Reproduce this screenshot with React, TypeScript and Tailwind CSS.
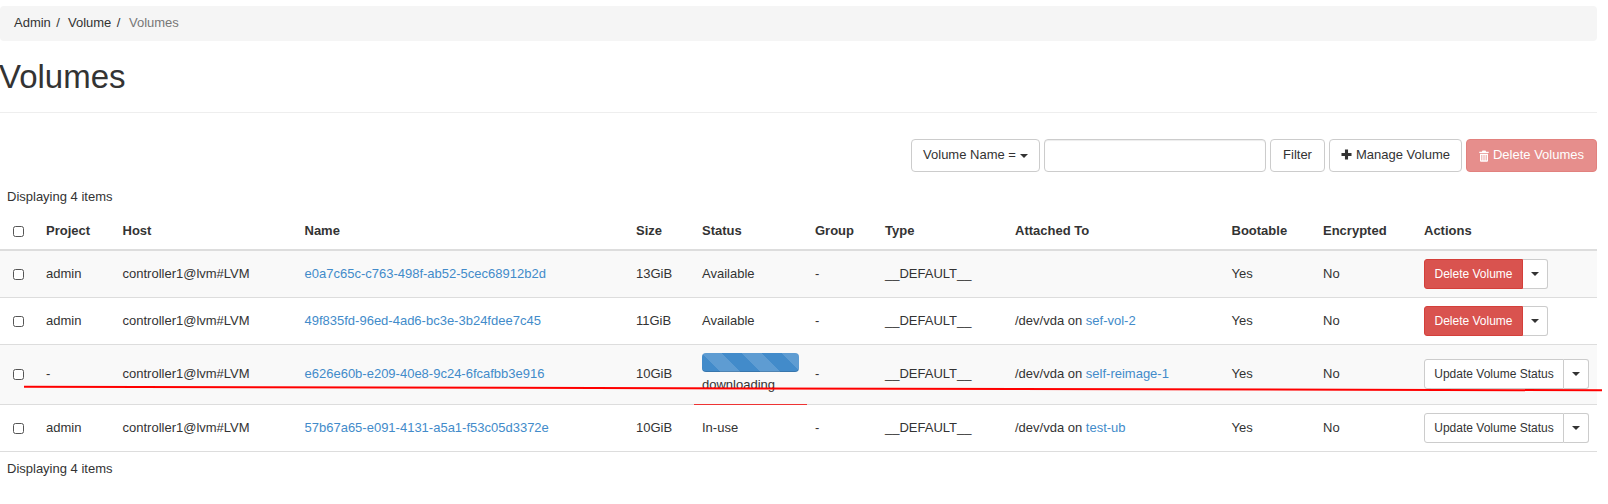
import React from "react";

const caret = "inline-block w-0 h-0 border-x-4 border-x-transparent border-t-4 border-t-[#333]";
const sans = "font-['Liberation_Sans',Arial,sans-serif]";

function Split({ kind, label }: { kind: "danger" | "default"; label: string }) {
  const main =
    kind === "danger"
      ? "bg-[#d9534f] border-[#d43f3a] text-white w-[99px]"
      : "bg-white border-[#ccc] text-[#333] w-[140px]";
  return (
    <div className="flex h-[30px] text-xs">
      <button className={`${main} border rounded-l-[3px] h-[30px] leading-[18px] text-center whitespace-nowrap`}>{label}</button>
      <button className="w-[25px] h-[30px] bg-white border border-[#ccc] border-l-0 rounded-r-[3px] flex items-center justify-center">
        <span className={caret} />
      </button>
    </div>
  );
}

const Link = ({ children }: { children: React.ReactNode }) => <a className="text-[#428bca]">{children}</a>;
const Check = () => <input type="checkbox" className="block ml-[5px] m-0 w-[11px] h-[11px] appearance-none rounded-[2.5px] border-[1.5px] border-[#555] bg-white" />;

const Attached = ({ name }: { name: string }) => (
  <>
    /dev/vda on <Link>{name}</Link>
  </>
);

const Progress = () => (
  <div>
    <div className="h-[19px] w-[97px] rounded bg-[#428bca] bg-[linear-gradient(45deg,rgba(255,255,255,0.15)_25%,transparent_25%,transparent_50%,rgba(255,255,255,0.15)_50%,rgba(255,255,255,0.15)_75%,transparent_75%,transparent)] bg-size-[40px_40px] shadow-[inset_0_-1px_0_rgba(0,0,0,0.15)]" />
    <div className="mt-[4px] leading-[18.5px]">downloading</div>
  </div>
);

type Row = {
  project: string;
  name: string;
  size: string;
  status: React.ReactNode;
  group: string;
  attached: React.ReactNode;
  action: React.ReactNode;
  tall?: boolean;
};

const rows: Row[] = [
  { project: "admin", name: "e0a7c65c-c763-498f-ab52-5cec68912b2d", size: "13GiB", status: "Available", group: "-", attached: "", action: <Split kind="danger" label="Delete Volume" /> },
  { project: "admin", name: "49f835fd-96ed-4ad6-bc3e-3b24fdee7c45", size: "11GiB", status: "Available", group: "-", attached: <Attached name="sef-vol-2" />, action: <Split kind="danger" label="Delete Volume" /> },
  { project: "-", name: "e626e60b-e209-40e8-9c24-6fcafbb3e916", size: "10GiB", status: <Progress />, group: "-", attached: <Attached name="self-reimage-1" />, action: <Split kind="default" label="Update Volume Status" />, tall: true },
  { project: "admin", name: "57b67a65-e091-4131-a5a1-f53c05d3372e", size: "10GiB", status: "In-use", group: "-", attached: <Attached name="test-ub" />, action: <Split kind="default" label="Update Volume Status" /> },
];

const widths = ["w-[38px]", "w-[76.5px]", "w-[182px]", "w-[331.5px]", "w-[66px]", "w-[113px]", "w-[70px]", "w-[130px]", "w-[216.5px]", "w-[91.5px]", "w-[101px]", "w-[181px]"];
const heads = ["Project", "Host", "Name", "Size", "Status", "Group", "Type", "Attached To", "Bootable", "Encrypted", "Actions"];

export default function App() {
  return (
    <div className={`${sans} relative h-[504px] w-[1608px] overflow-hidden bg-white text-[13px] leading-[18.57px] text-[#333]`}>
      <div className="w-[1597px]">
        <nav className="mt-[6px] h-[35px] rounded bg-[#f5f5f5] px-[14px] flex items-center">
          <span>Admin</span>
          <span className="pl-[5.5px] pr-[8px]">/</span>
          <span>Volume</span>
          <span className="pl-[5.5px] pr-[8.5px]">/</span>
          <span className="text-[#777]">Volumes</span>
        </nav>

        <h1 className="mt-[16px] -ml-px h-[40px] text-[33px] leading-[39.6px] font-medium">Volumes</h1>
        <div className="mt-[15px] border-t border-[#eee]" />

        <div className="mt-[26px] flex justify-end gap-1">
          <button className="h-[33px] w-[129px] rounded border border-[#ccc] bg-white flex items-center justify-center gap-1">
            Volume Name = <span className={caret} />
          </button>
          <input className="h-[33px] w-[222px] rounded border border-[#ccc] bg-white shadow-[inset_0_1px_1px_rgba(0,0,0,0.075)]" />
          <button className="h-[33px] w-[55px] rounded border border-[#ccc] bg-white">Filter</button>
          <button className="h-[33px] w-[133px] rounded border border-[#ccc] bg-white flex items-center justify-center gap-1">
            <svg className="-translate-y-px" width="11" height="11" viewBox="0.3 0.3 11.4 11.4" fill="#333"><path d="M4.400 0.800h3.200v3.600h3.600v3.200H7.600v3.600H4.400V7.600H0.800V4.400h3.600z" /></svg>
            Manage Volume
          </button>
          <button className="h-[33px] w-[131px] rounded border border-[#d43f3a] bg-[#d9534f] text-white opacity-65 flex items-center justify-center gap-1">
            <svg width="10" height="12" viewBox="0 0 10 12" fill="#fff"><path d="M3.500 0.500h3l0.700 1.200h2.500v1.300H0.300V1.700h2.500zM1 3.700h8v7.100a1 1 0 0 1-1 1H2a1 1 0 0 1-1-1z" /><path d="M2.800 5v5.400M5 5v5.400M7.200 5v5.400" stroke="#d9534f" strokeWidth="0.800" /></svg>
            Delete Volumes
          </button>
        </div>

        <div className="mt-[16px] pl-[7px] h-[19px]">Displaying 4 items</div>

        <table className="mt-[5px] w-[1597px] table-fixed border-collapse">
          <colgroup>
            {widths.map((w, i) => <col key={i} className={w} />)}
          </colgroup>
          <thead>
            <tr className="h-[38px] border-b-2 border-[#ddd]">
              <th className="px-2 pt-px"><Check /></th>
              {heads.map((h) => (
                <th key={h} className="px-2 pt-px text-left font-bold">{h}</th>
              ))}
            </tr>
          </thead>
          <tbody>
            {rows.map((r, i) => {
              const cell = r.tall ? "px-2" : "px-2 pt-[2px]";
              return (
                <tr key={r.name} className={`border-b border-[#ddd] ${i % 2 === 0 || r.tall ? "bg-[#f9f9f9]" : "bg-white"} ${r.tall ? "h-[60px]" : "h-[47px]"}`}>
                  <td className={cell}><Check /></td>
                  <td className={cell}>{r.project}</td>
                  <td className={`${cell} whitespace-nowrap`}>controller1@lvm#LVM</td>
                  <td className={`${cell} whitespace-nowrap`}><Link>{r.name}</Link></td>
                  <td className={cell}>{r.size}</td>
                  <td className={cell}>{r.status}</td>
                  <td className={cell}>{r.group}</td>
                  <td className={cell}>__DEFAULT__</td>
                  <td className={`${cell} whitespace-nowrap`}>{r.attached}</td>
                  <td className={cell}>Yes</td>
                  <td className={cell}>No</td>
                  <td className="px-2">{r.action}</td>
                </tr>
              );
            })}
          </tbody>
        </table>

        <div className="mt-[8px] pl-[7px]">Displaying 4 items</div>
      </div>

      <svg className="absolute left-0 top-0 pointer-events-none" width="1608" height="504">
        <line x1="24" y1="386.700" x2="1602" y2="390.300" stroke="#f00" strokeWidth="2" />
        <line x1="694" y1="404.500" x2="807" y2="404.500" stroke="#e33" strokeWidth="1" />
      </svg>
    </div>
  );
}
